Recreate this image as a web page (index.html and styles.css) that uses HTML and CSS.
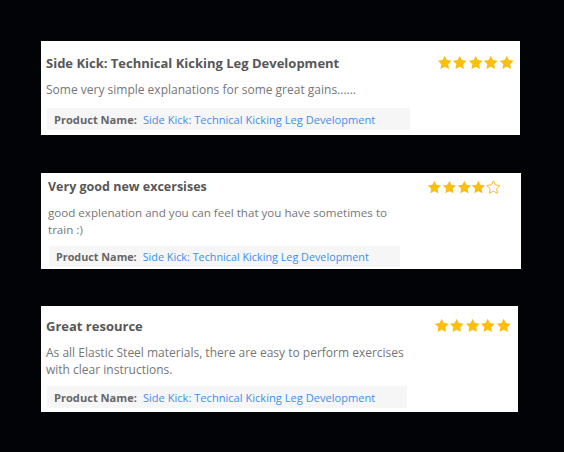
FILE: index.html
```html
<!DOCTYPE html>
<html lang="en">
<head>
    <meta charset="UTF-8">
    <meta name="viewport" content="width=device-width, initial-scale=1.0">
    <title>Reviews</title>
    <link rel="stylesheet" href="styles.css">
</head>
<body>
    <svg width="0" height="0" class="defs">
        <defs>
            <path id="star" d="M12 1.2l3.3 6.7 7.4 1.1-5.4 5.2 1.3 7.4L12 18.1l-6.6 3.5 1.3-7.4-5.4-5.2 7.4-1.1z"/>
        </defs>
    </svg>

    <div class="reviews">
        <div class="review review-one">
            <div class="review-main">
                <h3 class="review-title">Side Kick: Technical Kicking Leg Development</h3>
                <p class="review-text">Some very simple explanations for some great gains......</p>
                <div class="product">
                    <span class="product-label">Product Name:</span>
                    <a class="product-link" href="#">Side Kick: Technical Kicking Leg Development</a>
                </div>
            </div>
            <div class="stars">
                <svg class="star" viewBox="0 0 24 24"><use href="#star"/></svg>
                <svg class="star" viewBox="0 0 24 24"><use href="#star"/></svg>
                <svg class="star" viewBox="0 0 24 24"><use href="#star"/></svg>
                <svg class="star" viewBox="0 0 24 24"><use href="#star"/></svg>
                <svg class="star" viewBox="0 0 24 24"><use href="#star"/></svg>
            </div>
        </div>

        <div class="review review-two">
            <div class="review-main">
                <h3 class="review-title">Very good new excersises</h3>
                <p class="review-text">good explenation and you can feel that you have sometimes to train :)</p>
                <div class="product">
                    <span class="product-label">Product Name:</span>
                    <a class="product-link" href="#">Side Kick: Technical Kicking Leg Development</a>
                </div>
            </div>
            <div class="stars">
                <svg class="star" viewBox="0 0 24 24"><use href="#star"/></svg>
                <svg class="star" viewBox="0 0 24 24"><use href="#star"/></svg>
                <svg class="star" viewBox="0 0 24 24"><use href="#star"/></svg>
                <svg class="star" viewBox="0 0 24 24"><use href="#star"/></svg>
                <svg class="star empty" viewBox="0 0 24 24"><use href="#star"/></svg>
            </div>
        </div>

        <div class="review review-three">
            <div class="review-main">
                <h3 class="review-title">Great resource</h3>
                <p class="review-text">As all Elastic Steel materials, there are easy to perform exercises with clear instructions.</p>
                <div class="product">
                    <span class="product-label">Product Name:</span>
                    <a class="product-link" href="#">Side Kick: Technical Kicking Leg Development</a>
                </div>
            </div>
            <div class="stars">
                <svg class="star" viewBox="0 0 24 24"><use href="#star"/></svg>
                <svg class="star" viewBox="0 0 24 24"><use href="#star"/></svg>
                <svg class="star" viewBox="0 0 24 24"><use href="#star"/></svg>
                <svg class="star" viewBox="0 0 24 24"><use href="#star"/></svg>
                <svg class="star" viewBox="0 0 24 24"><use href="#star"/></svg>
            </div>
        </div>
    </div>
</body>
</html>
```

FILE: styles.css
```css
body {
    margin: 0;
    background-color: #020306;
    font-family: "Open Sans", "Liberation Sans", sans-serif;
}
.defs {
    position: absolute;
}
.reviews {
    display: flex;
    flex-direction: column;
    gap: 38px;
    padding: 41px 0 0 41px;
}
.review {
    display: flex;
    justify-content: space-between;
    align-items: flex-start;
    width: 479px;
    background-color: #fff;
    box-sizing: border-box;
}
.review-title {
    margin: 0;
    font-size: 13px;
    line-height: 20px;
    font-weight: 700;
    color: #575757;
}
.review-text {
    margin: 8px 0 0;
    font-size: 12px;
    line-height: 17px;
    color: #767676;
}
.product {
    margin: 10px 0 0 1px;
    padding: 0 7px;
    height: 22px;
    display: flex;
    align-items: center;
    gap: 6px;
    background-color: #f6f6f6;
    font-size: 11.1px;
    white-space: nowrap;
}
.product-label {
    font-weight: 700;
    color: #666;
}
.product-link {
    color: #3f8fe6;
    text-decoration: none;
}
.stars {
    display: flex;
    align-items: center;
    height: 20px;
}
.star {
    width: 15.5px;
    height: 15.5px;
    fill: #fbbf0f;
}
.star.empty {
    fill: none;
    stroke: #fbbf0f;
    stroke-width: 1.6;
}

/* per-review sizing, the cards were not all captured at the same size */
.review-one {
    padding: 12px 6px 5px 5px;
}
.review-one .review-main {
    width: 364px;
}
.review-two {
    width: 480px;
    padding: 4px 20px 2px 7px;
    margin-bottom: -1px;
}
.review-two .review-main {
    width: 352px;
}
.review-two .review-title {
    font-size: 12.5px;
}
.review-two .review-text {
    margin-top: 7px;
    font-size: 11.6px;
}
.review-two .product {
    margin-top: 8px;
    height: 21px;
    font-size: 10.8px;
}
.review-two .star {
    width: 14.8px;
    height: 14.8px;
}
.review-three {
    width: 477px;
    padding: 10px 7px 4px 5px;
}
.review-three .review-main {
    width: 361px;
}
.review-three .review-text {
    width: 372px;
}
.review-three .product {
    margin-top: 8px;
}
```
